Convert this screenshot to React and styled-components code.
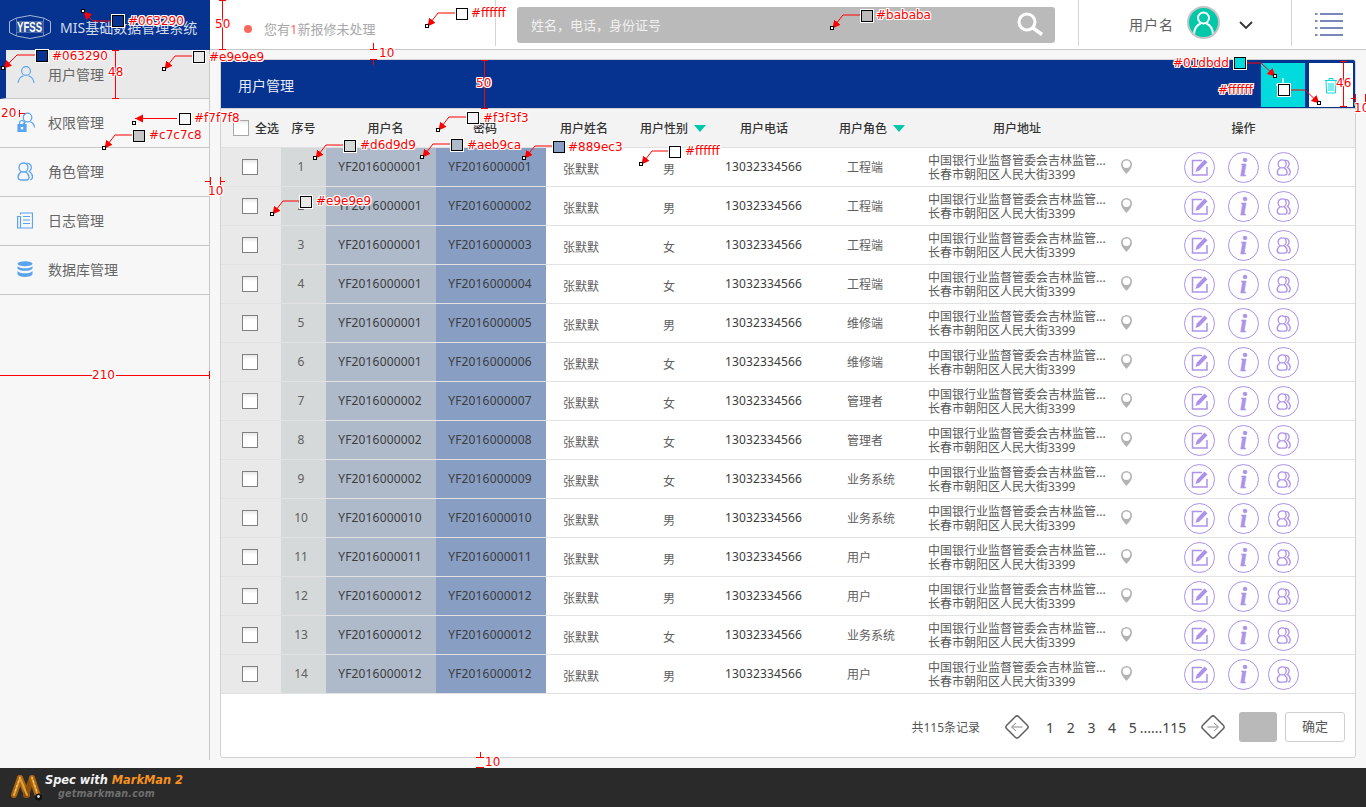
import React from "react";
import styled, { createGlobalStyle } from "styled-components";

const cjk = `"Noto Sans", "Noto Sans CJK SC", sans-serif`;

const Global = createGlobalStyle`
  html, body { margin: 0; padding: 0; background: #f7f7f8; }
  body { font-family: ${cjk}; width: 1366px; height: 807px; overflow: hidden; }
  * { box-sizing: border-box; }
`;

const Page = styled.div`
  position: relative; width: 1366px; height: 807px; display: flex; flex-direction: column; overflow: hidden;
  background: #f7f7f8;
`;

/* top bar */
const TopBar = styled.header`
  height: 50px; display: flex; background: #fff; border-bottom: 1px solid #c7c7c8; flex: none;
`;
const Brand = styled.div`
  width: 210px; height: 50px; background: #063290; display: flex; align-items: center; padding-left: 9px;
  gap: 9px; color: #d3dcec; font-size: 14px; white-space: nowrap; padding-top: 3px;
`;
const Notice = styled.div`
  width: 286px; height: 46px; display: flex; align-items: center; padding-left: 34px; gap: 12px;
  border-right: 1px solid #d4d4d4; color: #a8a8a8; font-size: 13px; padding-top: 11px;
  em { color: #ff6a5c; font-style: normal; }
`;
const Dot = styled.span`
  width: 8px; height: 8px; border-radius: 50%; background: #fb6a5e; flex: none;
`;
const SearchBox = styled.div`
  width: 538px; height: 36px; margin: 7px 0 0 21px; background: #bababa; border-radius: 3px;
  display: flex; align-items: center; justify-content: space-between; padding: 0 11px 2px 14px;
  color: #f1f1f1; font-size: 13px;
`;
const UserArea = styled.div`
  width: 214px; height: 46px; margin-left: 23px; border-left: 1px solid #d4d4d4; border-right: 1px solid #d4d4d4;
  display: flex; align-items: center; padding: 2px 0 0 50px; color: #5e5e5e; font-size: 14px; letter-spacing: 1px;
`;
const Avatar = styled.span`
  width: 33px; height: 33px; margin: -3px 0 0 13px; border-radius: 50%; background: #01c8a9; border: 2px solid #c4c4c4;
  display: flex; align-items: center; justify-content: center; overflow: hidden; flex: none;
`;
const Chevron = styled.span`
  margin-left: 19px; margin-top: 3px; display: flex;
`;
const MenuBtn = styled.div`
  margin: 13px 0 0 23px; display: flex;
`;

/* body */
const Body = styled.div`
  flex: 1; display: flex; min-height: 0;
`;
const Side = styled.nav`
  width: 210px; height: 710px; border-right: 1px solid #c7c7c8; flex: none; background: #f7f7f8;
`;
const SideItem = styled.div`
  height: 49px; display: flex; align-items: center; padding: 0 0 ${p => (p.$active ? 0 : 2)}px ${p => (p.$active ? "11px" : "17px")};
  border-bottom: 1px solid #c7c7c8; color: #666; font-size: 14px;
  background: ${p => (p.$active ? "#e9e9e9" : "#f7f7f8")};
  border-left: ${p => (p.$active ? "6px solid #063290" : "0")};
`;
const SideIcon = styled.span`
  width: 31px; display: flex; flex: none;
`;
const Main = styled.main`
  flex: 1; padding: 9px 10px 0;
`;
const Card = styled.section`
  height: 699px; border: 1px solid #d2d2d2; border-radius: 3px; background: #fff; display: flex; flex-direction: column;
  overflow: hidden;
`;
const CardHead = styled.div`
  height: 49px; flex: none; background: #063290; border-bottom: 1px solid #d2d2d2; display: flex; align-items: center;
  justify-content: space-between; padding: 2px 2px 0 17px; color: #e6ebf5; font-size: 14px;
`;
const HeadBtns = styled.div`
  display: flex; gap: 4px; height: 44px;
`;
const SquareBtn = styled.button`
  width: 44px; height: 44px; border: 0; padding: 0; display: flex; align-items: center; justify-content: center;
  background: ${p => p.$bg};
`;
const HeadRow = styled.div`
  height: 39px; flex: none; display: grid; align-items: center; background: #f3f3f3; border-bottom: 1px solid #e0e0e0;
  grid-template-columns: 60px 45px 119px 80px 115px 82px 84px 118px 186px 32px 1fr;
  font-size: 12px; color: #333; font-weight: 500;
`;
const HeadCell = styled.div`
  display: flex; align-items: center; white-space: nowrap; gap: 6px;
  justify-content: ${p => p.$left ? "flex-start" : "center"};
  padding-left: ${p => p.$pl || 0}px; padding-right: ${p => p.$pr || 0}px;
`;
const Tri = styled.i`
  width: 0; height: 0; border-left: 6.5px solid transparent; border-right: 6.5px solid transparent;
  border-top: 7px solid #01c8a9;
`;
const Check = styled.span`
  width: 16px; height: 16px; display: block; flex: none; background: linear-gradient(#e8e8e8, #fff 30%);
  border: 1px solid ${p => p.$light ? "#a8a8a8" : "#808080"};
`;
const Row = styled.div`
  height: 39px; flex: none; display: grid;
  grid-template-columns: 60px 45px 110px 110px 70px 106px 84px 118px 186px 32px 1fr;
  border-bottom: 1px solid #e2e2e2; font-size: 12px; color: #3c3c3c;
`;
const Cell = styled.div`
  display: flex; align-items: center; white-space: nowrap;
  justify-content: ${p => p.$left ? "flex-start" : "center"};
  background: ${p => p.$bg || "transparent"};
  padding: ${p => p.$top ?? 0}px ${p => p.$right ?? 0}px ${p => p.$bottom ?? 0}px ${p => p.$pl ?? 0}px;
  color: ${p => p.$soft ? "#606060" : "#3c3c3c"};
  letter-spacing: ${p => p.$num ? ".14px" : "0"};
`;
const Addr = styled.div`
  display: flex; flex-direction: column; justify-content: center; padding: 2px 0 0 4px; line-height: 14px; color: #5a5a5a;
  white-space: nowrap;
`;
const PinCell = styled.div`
  display: flex; align-items: center; justify-content: center; padding-bottom: 1px;
`;
const Actions = styled.div`
  display: flex; align-items: center; padding: 0 0 0 42px;
`;
const ActionIcon = styled.span`
  display: flex; margin-right: ${p => p.$gap}px;
`;
const Foot = styled.div`
  flex: 1; display: flex; align-items: center; padding: 3px 10px 0 0; justify-content: flex-end; font-size: 12px; color: #555;
`;
const Total = styled.span`
  margin-right: 24px;
`;
const Pages = styled.div`
  display: flex; align-items: center; font-size: 14px; color: #444; width: 170px; padding-left: 16px;
  span { width: 20.7px; }
  span:last-of-type { width: 11px; }
`;
const GrayBox = styled.div`
  width: 38px; height: 30px; background: #b9b9b9; border-radius: 3px; margin-left: 13px;
`;
const Confirm = styled.button`
  width: 60px; height: 30px; margin-left: 8px; background: #fff; border: 1px solid #cfcfcf; border-radius: 3px;
  font: 13px ${cjk}; color: #555; padding: 0 0 3px;
`;

/* markman strip */
const Strip = styled.footer`
  height: 39px; flex: none; background: #2a2a2a; display: flex; align-items: center; padding-left: 10px; gap: 1px;
  font-family: "DejaVu Sans", sans-serif; font-style: italic; font-weight: 700;
`;
const StripText = styled.div`
  display: flex; flex-direction: column; line-height: 13px;
`;
const StripTop = styled.div`
  font-size: 11.4px; color: #f2f2f2; white-space: nowrap; margin-top: -2px;
  b { color: #f7931e; }
`;
const StripSub = styled.div`
  font-size: 9.6px; color: #6f6f6f; padding-left: 13px; letter-spacing: .15px;
`;

/* spec overlay */
const Overlay = styled.svg`
  position: absolute; left: 0; top: 0; pointer-events: none;
`;
const Tag = styled.span.attrs(p => ({ style: { left: p.$x, top: p.$y } }))`
  position: absolute; transform: translateY(-50%); font: 12px/14px "DejaVu Sans", sans-serif; color: #f00; white-space: nowrap;
  text-shadow: 1px 0 0 #fff, -1px 0 0 #fff, 0 1px 0 #fff, 0 -1px 0 #fff, 1px 1px 0 #fff, -1px -1px 0 #fff, 1px -1px 0 #fff, -1px 1px 0 #fff;
`;
const Swatch = styled.span.attrs(p => ({ style: { left: p.$x, top: p.$y, background: p.$c } }))`
  position: absolute; width: 12px; height: 12px; border: 1px solid #000; box-shadow: 0 0 0 1px #fff;
`;

const genders = "男男女女男女女女女男男男女男";
const names = ["0001","0001","0001","0001","0001","0001","0002","0002","0002","0010","0011","0012","0012","0012"];
const pwds = ["0001","0002","0003","0004","0005","0006","0007","0008","0009","0010","0011","0012","0012","0012"];
const roles = ["工程端","工程端","工程端","工程端","维修端","维修端","管理者","管理者","业务系统","业务系统","用户","用户","业务系统","用户"];

const blue = "#5aa4ee";
const UserIco = () => (
  <svg width="18" height="19" viewBox="0 0 18 19" fill="none" stroke={blue} strokeWidth="1.1">
    <circle cx="9" cy="6" r="4.4" /><path d="M1 18c.6-4.6 3.6-6.6 5.6-7.2M17 18c-.6-4.6-3.6-6.6-5.6-7.2" />
  </svg>
);
const LockIco = () => (
  <svg width="18" height="20" viewBox="0 0 18 20" fill="none" stroke={blue} strokeWidth="1.2">
    <circle cx="10.5" cy="5.5" r="4.3" /><path d="M6 12c1-1 2-1.600 2.500-2M17.500 15.500c-.3-3-2-4.800-4-5.600" />
    <path d="M2.500 12.500V11a2.500 2.500 0 0 1 5 0v1.500" />
    <path d="M1 12.500h8V19.500H1z" fill={blue} /><rect x="3.800" y="15" width="2.400" height="2.400" fill="#fff" stroke="none" />
  </svg>
);
const GroupIco = ({ c = blue, w = 16, h = 19, sw = 1.3 }) => (
  <svg width={w} height={h} viewBox="0 0 16 19" fill="none" stroke={c} strokeWidth={sw}>
    <circle cx="6.500" cy="5.500" r="4.500" /><path d="M4.500 9.800C2.500 11 1 12.500 1 15c0 2.500 1.500 3 3.500 3h5c2 0 2.500-1.500 2.500-2.800 0-2.500-1.500-4.200-3.500-5.400" />
    <path d="M9.500 1.200c3 .2 4.800 2.200 4.800 4.500 0 2-1 3-2 3.800 2 1.200 3.200 3 3.200 5.200 0 1.500-.8 2.800-2.200 3.300" />
  </svg>
);
const LogIco = () => (
  <svg width="16" height="17" viewBox="0 0 16 17" fill="none" stroke={blue} strokeWidth="1.200">
    <path d="M3.500 2.500V1h12v15H.6V4.500h2.900V16" /><path d="M6 4.500h7M6 8h7M6 11.500h7" />
  </svg>
);
const DbIco = () => (
  <svg width="16" height="16" viewBox="0 0 16 16" fill={blue}>
    <ellipse cx="8" cy="2.700" rx="7.500" ry="2.500" />
    <path d="M.5 5c1 1.600 4 2.300 7.500 2.300S14.500 6.600 15.500 5v2.400C14.500 9 11.500 9.800 8 9.800S1.500 9 .5 7.400zM.5 10c1 1.600 4 2.300 7.500 2.300s6.500-.7 7.500-2.300v3.200C14.500 15 11.500 16 8 16s-6.500-1-7.500-2.800z" />
  </svg>
);
const Logo = () => (
  <svg width="42" height="24" viewBox="0 0 42 24" fill="none">
    <path d="M.5 6.500 7.500 3 21 .5 34.500 3l7 3.500v11l-7 3.500L21 23.500 7.500 21l-7-3.500z" stroke="#b7c5de" strokeWidth=".9" />
    <path d="M7.500 3v18M34.500 3v18M7.500 6.500h27M7.500 17.500h27" stroke="#8ea3c9" strokeWidth=".7" />
    <rect x="7.500" y="6.500" width="27" height="11" fill="#2a5199" />
    <text transform="translate(8 17) scale(.69 1)" fontFamily="Liberation Sans" fontWeight="700" fontSize="14" fill="#fff">YFSS</text>
  </svg>
);
const Pin = () => (
  <svg width="13" height="17" viewBox="0 0 13 17" fill="none">
    <path d="M6.500 16C4.500 13.500 1 10.500 1 6.500a5.500 5.500 0 0 1 11 0C12 10.500 8.500 13.500 6.500 16z" fill="#b3b3b3" />
    <circle cx="6.500" cy="6.300" r="3.800" fill="#fff" />
  </svg>
);
const Circle = ({ children }) => (
  <svg width="31" height="31" viewBox="0 0 31 31" fill="none">
    <circle cx="15.500" cy="15.500" r="15" stroke="#ad92ec" strokeWidth="1" />
    {children}
  </svg>
);
const EditAct = () => (
  <Circle>
    <path d="M23 15v8H8.500V8.500H18" stroke="#ad92ec" strokeWidth="1.500" />
    <path d="M11.500 20l1.200-4.200L20.500 7.500l3 2.800-8 8.300z" fill="#ad92ec" />
  </Circle>
);
const InfoAct = () => (
  <Circle>
    <text x="15.500" y="24" textAnchor="middle" fontFamily="Liberation Serif" fontStyle="italic" fontWeight="700" fontSize="25" fill="#ad92ec" stroke="#ad92ec" strokeWidth=".5">i</text>
  </Circle>
);
const GroupAct = () => (
  <Circle>
    <g transform="translate(8 7)"><GroupIco c="#ad92ec" w={15} h={17} sw={1.5} /></g>
  </Circle>
);
const PrevNext = ({ flip }) => (
  <svg width="26" height="26" viewBox="0 0 26 26" fill="none">
    <rect x="4.500" y="4.500" width="17" height="17" rx="2.500" transform="rotate(45 13 13)" stroke="#5f5f5f" strokeWidth="1.500" />
    <path d={flip ? "M7.500 13h10.500M14 9l4.500 4-4.500 4" : "M18.500 13H8M12 9l-4.500 4 4.500 4"} stroke="#8a8a8a" strokeWidth="1" />
  </svg>
);

const swatches = [
  { p: [82, 10], s: [112, 15], l: [128, 21], t: "#063290", via: [[112, 21], [93, 21]] },
  { p: [426, 25], s: [456, 8], l: [471, 13], t: "#ffffff", via: [[456, 13], [438, 13]] },
  { p: [831, 27], s: [861, 10], l: [876, 15], t: "#bababa", via: [[861, 15], [843, 15]] },
  { p: [2, 67], s: [36, 50], l: [52, 56], t: "#063290", via: [[36, 55], [17, 55]] },
  { p: [163, 68], s: [193, 51], l: [209, 57], t: "#e9e9e9", via: [[193, 56], [175, 56]] },
  { p: [133, 122], s: [179, 113], l: [194, 118], t: "#f7f7f8", via: [[177, 118.5]], end: [135, 118.5] },
  { p: [103, 147], s: [133, 130], l: [149, 135], t: "#c7c7c8", via: [[133, 135], [115, 135]] },
  { p: [437, 129], s: [467, 112], l: [483, 118], t: "#f3f3f3", via: [[467, 117], [449, 117]] },
  { p: [314, 157], s: [344, 140], l: [360, 145], t: "#d6d9d9", via: [[344, 145], [326, 145]] },
  { p: [421, 156], s: [451, 139], l: [467, 145], t: "#aeb9ca", via: [[451, 144], [433, 144]] },
  { p: [523, 157], s: [553, 141], l: [568, 147], t: "#889ec3", via: [[553, 146], [535, 146]] },
  { p: [640, 163], s: [669, 146], l: [685, 151], t: "#ffffff", via: [[669, 151], [652, 151]] },
  { p: [271, 213], s: [300, 196], l: [316, 201], t: "#e9e9e9", via: [[300, 201], [283, 201]] },
  { p: [1274, 75], s: [1234, 57], l: [1173, 63], t: "#01dbdd", via: [[1247, 63], [1261, 63]] },
  { p: [1318, 102], s: [1278, 84], l: [1218, 90], t: "#ffffff", via: [[1291, 90], [1305, 90]] },
];
const dims = [
  { v: [222, 0, 49], l: [215, 24], t: "50" },
  { v: [115, 50, 98], l: [108, 72], t: "48" },
  { v: [484, 60, 108], l: [476, 83], t: "50" },
  { v: [1343, 61, 106], l: [1336, 83], t: "46" },
];
const stubs = [
  { d: "M373 43v6M370 49h7M370 59h7M373 59v6", l: [379, 53], t: "10" },
  { d: "M205 181h5M210 177v8M220 177v8M220 181h5", l: [208, 191], t: "10" },
  { d: "M480 752v5M476 757h8M476 767h8", l: [485, 762], t: "10" },
  { d: "M19 110v7M19 113h6", l: [1, 113], t: "20" },
  { d: "M1351 98h4M1355 94v8M1365 94v8", l: [1354, 108], t: "10" },
  { d: "M0 375h92M116 375h93M209 371v8", l: [92, 375], t: "210" },
];

const Spec = () => (
  <>
    <Overlay width="1366" height="807" viewBox="0 0 1366 807">
      <defs>
        <marker id="ah" markerUnits="userSpaceOnUse" markerWidth="9" markerHeight="9" refX="8" refY="4" orient="auto">
          <path d="M0 0 8 4 0 8z" fill="#f00" />
        </marker>
      </defs>
      {swatches.map((a, i) => (
        <g key={i}>
          <polyline
            points={[...a.via, a.end || [a.p[0] + 1.500, a.p[1] + 1.500]].map(q => q.join(",")).join(" ")}
            fill="none" stroke="#f00" strokeWidth="1" markerEnd="url(#ah)"
          />
          <rect x={a.p[0] - .500} y={a.p[1] - .500} width="3" height="3" fill="#fff" stroke="#000" strokeWidth="1" />
        </g>
      ))}
      {dims.map((d, i) => (
        <path key={i} d={`M${d.v[0] + .5} ${d.v[1]}V${d.v[2]}M${d.v[0] - 3} ${d.v[1] + .5}h7M${d.v[0] - 3} ${d.v[2] + .5}h7`} stroke="#f00" fill="none" />
      ))}
      {stubs.map((d, i) => <path key={i} d={d.d} stroke="#f00" fill="none" shapeRendering="crispEdges" />)}
    </Overlay>
    {swatches.map((a, i) => (
      <React.Fragment key={i}>
        <Swatch $x={a.s[0]} $y={a.s[1]} $c={a.t} />
        <Tag $x={a.l[0]} $y={a.l[1]}>{a.t}</Tag>
      </React.Fragment>
    ))}
    {[...dims, ...stubs].map((d, i) => <Tag key={i} $x={d.l[0]} $y={d.l[1]}>{d.t}</Tag>)}
  </>
);

export default function App() {
  return (
    <Page>
      <Global />
      <TopBar>
        <Brand><Logo /><span>MIS基础数据管理系统</span></Brand>
        <Notice><Dot /><span>您有<em>1</em>新报修未处理</span></Notice>
        <SearchBox>
          <span>姓名，电话，身份证号</span>
          <svg width="27" height="24" viewBox="0 0 27 24" fill="none" stroke="#fff">
            <circle cx="10" cy="10" r="8" strokeWidth="3" /><path d="M16 16l9 6.500" strokeWidth="3.500" />
          </svg>
        </SearchBox>
        <UserArea>
          用户名
          <Avatar>
            <svg width="29" height="29" viewBox="0 0 29 29" fill="none" stroke="#fff" strokeWidth="2">
              <circle cx="14.500" cy="10" r="5.500" /><path d="M5 26c.5-6 3-9 6.500-10.500M24 26c-.5-6-3-9-6.500-10.500" />
            </svg>
          </Avatar>
          <Chevron>
            <svg width="14" height="9" viewBox="0 0 14 9" fill="none" stroke="#333" strokeWidth="1.800"><path d="M1 1l6 6 6-6" /></svg>
          </Chevron>
        </UserArea>
        <MenuBtn>
          <svg width="28" height="23" viewBox="0 0 28 23" stroke="#7b86bd" strokeWidth="2">
            <path d="M0 1h2.500M5 1h23M0 8h2.500M5 8h23M0 15h2.500M5 15h23M0 22h2.500M5 22h23" />
          </svg>
        </MenuBtn>
      </TopBar>
      <Body>
        <Side>
          <SideItem $active><SideIcon><UserIco /></SideIcon>用户管理</SideItem>
          <SideItem><SideIcon><LockIco /></SideIcon>权限管理</SideItem>
          <SideItem><SideIcon><GroupIco /></SideIcon>角色管理</SideItem>
          <SideItem><SideIcon><LogIco /></SideIcon>日志管理</SideItem>
          <SideItem><SideIcon><DbIco /></SideIcon>数据库管理</SideItem>
        </Side>
        <Main>
          <Card>
            <CardHead>
              <span>用户管理</span>
              <HeadBtns>
                <SquareBtn $bg="#01dbdd">
                  <svg width="14" height="14" viewBox="0 0 14 14" stroke="#fff" strokeWidth="1.500"><path d="M7 0v14M0 7h14" /></svg>
                </SquareBtn>
                <SquareBtn $bg="#fff">
                  <svg width="14" height="17" viewBox="0 0 14 17" fill="none" stroke="#01dbdd" strokeWidth="1">
                    <path d="M1 3.500h12M5 3.500V1.500h4v2M2 3.500l.6 12.500h8.800L12 3.500M5 6v8M7 6v8M9 6v8" />
                  </svg>
                </SquareBtn>
              </HeadBtns>
            </CardHead>
            <HeadRow>
              <HeadCell $left $pl={12}><Check $light /><span>全选</span></HeadCell>
              <HeadCell>序号</HeadCell>
              <HeadCell>用户名</HeadCell>
              <HeadCell>密码</HeadCell>
              <HeadCell $pl={3}>用户姓名</HeadCell>
              <HeadCell $left>用户性别<Tri /></HeadCell>
              <HeadCell>用户电话</HeadCell>
              <HeadCell $left $pl={33}>用户角色<Tri /></HeadCell>
              <HeadCell>用户地址</HeadCell>
              <HeadCell />
              <HeadCell $pr={10}>操作</HeadCell>
            </HeadRow>
            {pwds.map((pw, i) => (
              <Row key={i}>
                <Cell $bg="#e9e9e9" $right={2}><Check /></Cell>
                <Cell $bg="#d6d9d9" $soft $right={5} $bottom={1}>{i + 1}</Cell>
                <Cell $bg="#aeb9ca" $num $right={2} $bottom={1}>YF201600{names[i]}</Cell>
                <Cell $bg="#889ec3" $num $right={2} $bottom={1}>YF201600{pw}</Cell>
                <Cell $top={4} $soft>张默默</Cell>
                <Cell $top={4} $soft>{genders[i]}</Cell>
                <Cell $num $right={1} $bottom={1}>13032334566</Cell>
                <Cell $left $pl={41} $soft $bottom={1}>{roles[i]}</Cell>
                <Addr><span>中国银行业监督管委会吉林监管...</span><span>长春市朝阳区人民大街3399</span></Addr>
                <PinCell><Pin /></PinCell>
                <Actions>
                  <ActionIcon $gap={13}><EditAct /></ActionIcon>
                  <ActionIcon $gap={9}><InfoAct /></ActionIcon>
                  <ActionIcon $gap={0}><GroupAct /></ActionIcon>
                </Actions>
              </Row>
            ))}
            <Foot>
              <Total>共115条记录</Total>
              <PrevNext />
              <Pages>
                <span>1</span><span>2</span><span>3</span><span>4</span><span>5</span>......115
              </Pages>
              <PrevNext flip />
              <GrayBox />
              <Confirm>确定</Confirm>
            </Foot>
          </Card>
        </Main>
      </Body>
      <Strip>
        <svg width="34" height="32" viewBox="0 0 34 32" fill="none" strokeLinecap="round">
          <g stroke="#a9660f" strokeWidth="6">
            <path d="M10 6 4 23" />
            <path d="M10 6 17 23" />
            <path d="M22 6 16 23" stroke="#8a5208" />
            <path d="M22 6 28 24" />
          </g>
          <g stroke="#e8a03c" strokeWidth="2">
            <path d="M10 6 4 23M22 6 28 24M10 6 17 23" />
          </g>
          <g stroke="#f6d79a" strokeWidth="1" strokeDasharray="1 3.500">
            <path d="M10 5 4 22M22 5 28 23" />
          </g>
          <circle cx="28.500" cy="25" r="3.500" fill="#111" /><circle cx="28.500" cy="24.500" r="1.400" fill="#ddd" />
        </svg>
        <StripText>
          <StripTop>Spec with <b>MarkMan 2</b></StripTop>
          <StripSub>getmarkman.com</StripSub>
        </StripText>
      </Strip>
      <Spec />
    </Page>
  );
}
